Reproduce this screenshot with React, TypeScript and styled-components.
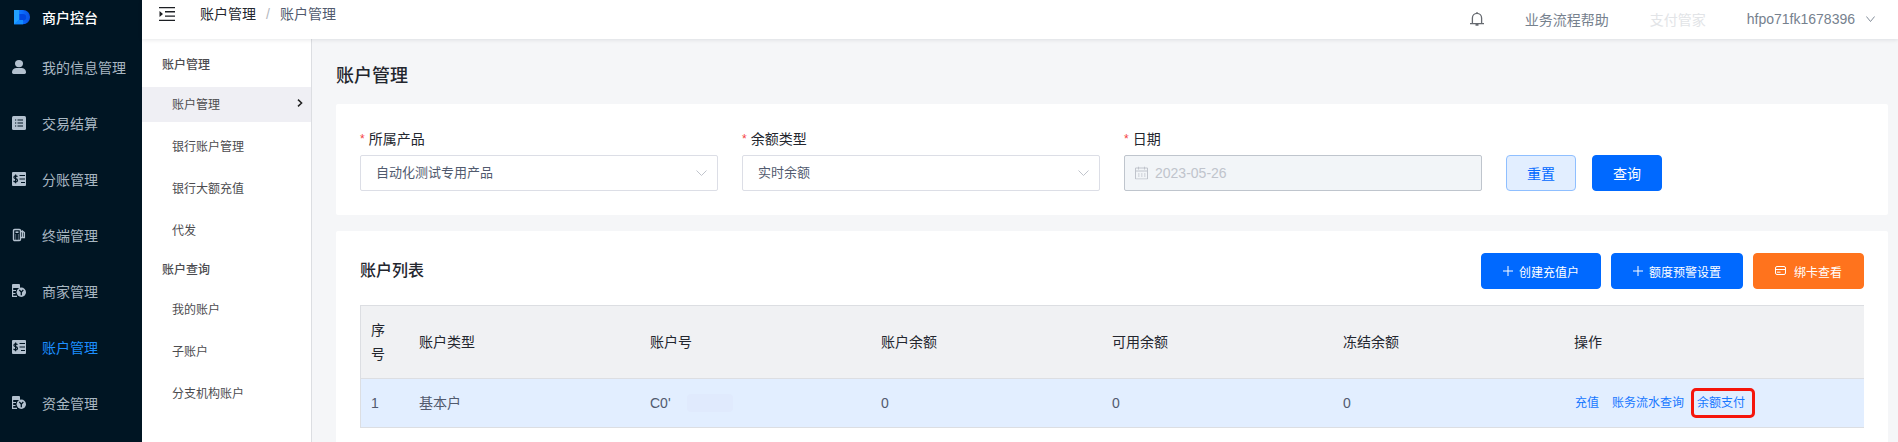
import React from "react";
import styled, { createGlobalStyle } from "styled-components";

const GlobalStyle = createGlobalStyle`
  *, *::before, *::after { box-sizing: border-box; }
  body {
    margin: 0;
    background: #f5f6f8;
    color: #23262e;
    font-family: "Liberation Sans", "Noto Sans CJK SC", sans-serif;
    font-size: 14px;
  }
  a { color: inherit; text-decoration: none; }
  ul { margin: 0; padding: 0; list-style: none; }
  button, input, select { font-family: inherit; }
  svg { display: block; flex: none; }
`;

const Shell = styled.div`
  display: flex;
  min-height: 100vh;
`;

const Sidebar = styled.nav`
  flex: none;
  width: 142px;
  background: #001523;
`;

const Brand = styled.a`
  display: flex;
  align-items: center;
  gap: 12px;
  height: 39px;
  padding: 0 0 5px 14px;
  color: #fff;
  font-weight: 500;
`;

const SideLink = styled.a<{ $active?: boolean }>`
  display: flex;
  align-items: center;
  gap: 16px;
  height: 56px;
  padding-left: 12px;
  color: ${(p) => (p.$active ? "#1c8fff" : "#a9b7c2")};

  svg { color: #b3c1cf; }
`;

const Body = styled.div`
  flex: 1;
  min-width: 0;
  display: flex;
  flex-direction: column;
`;

const Topbar = styled.header`
  position: relative;
  z-index: 1;
  display: flex;
  justify-content: space-between;
  height: 39px;
  padding: 0 23px 0 16px;
  background: #fff;
  box-shadow: 0 1px 4px rgba(0, 21, 41, 0.1);
`;

const TopLeft = styled.div`
  display: flex;
  align-items: center;
  gap: 24px;
  height: 28px;
`;

const IconButton = styled.button`
  padding: 0;
  border: 0;
  background: none;
  color: #1c1f23;
  cursor: pointer;
`;

const Crumbs = styled.div`
  display: flex;
  align-items: baseline;
  gap: 10px;
  color: #515a6e;
  line-height: 22px;

  a { color: #23262e; }
  i { color: #b4b8c0; font-style: normal; }
`;

const TopRight = styled.div`
  display: flex;
  align-items: center;
  gap: 41px;
  height: 37px;
  color: #76818e;
`;

const MutedLink = styled.a`
  color: #e2e4e7;
`;

const UserMenu = styled.button`
  display: flex;
  align-items: center;
  gap: 11px;
  padding: 0;
  border: 0;
  background: none;
  color: inherit;
  font-size: 14px;
  cursor: pointer;
`;

const Columns = styled.div`
  flex: 1;
  display: flex;
`;

const Submenu = styled.nav`
  flex: none;
  width: 170px;
  padding-top: 4px;
  border-right: 1px solid #dcdee2;
  background: #fff;
  color: #4c4c4f;
  font-size: 12px;
`;

const GroupTitle = styled.h2`
  margin: 0;
  padding-left: 20px;
  font-size: 12px;
  font-weight: 500;
  line-height: 44px;
`;

const SubItem = styled.li`
  & + & { margin-top: 7px; }
`;

const SubLink = styled.a<{ $active?: boolean }>`
  display: flex;
  align-items: center;
  justify-content: space-between;
  height: 35px;
  padding: 0 8px 3px 30px;
  background: ${(p) => (p.$active ? "#efeff4" : "transparent")};
`;

const Main = styled.main`
  flex: 1;
  min-width: 0;
  display: flex;
  flex-direction: column;
  padding: 23px 10px 0 24px;
`;

const PageTitle = styled.h1`
  margin: 0 0 14px;
  font-size: 18px;
  font-weight: 500;
  line-height: 28px;
`;

const FilterCard = styled.form`
  display: grid;
  grid-template-columns: repeat(4, 1fr);
  gap: 24px;
  align-items: end;
  margin-bottom: 16px;
  padding: 24px;
  border-radius: 2px;
  background: #fff;
`;

const Field = styled.div`
  display: flex;
  flex-direction: column;
  gap: 5px;
`;

const Label = styled.label`
  display: flex;
  gap: 4px;
  height: 22px;
  line-height: 22px;

  &::before {
    content: "*";
    color: #f53f3f;
    font-size: 12px;
  }
`;

const Control = styled.div<{ $iconSide: "left" | "right" }>`
  position: relative;

  svg {
    position: absolute;
    top: 50%;
    ${(p) => p.$iconSide}: 11px;
    transform: translateY(-50%);
    pointer-events: none;
  }
`;

const Select = styled.select`
  appearance: none;
  display: block;
  width: 100%;
  height: 36px;
  padding: 0 32px 2px 15px;
  border: 1px solid #dcdee6;
  border-radius: 2px;
  background: #fff;
  color: #515a6e;
  font-size: 13px;
`;

const DateInput = styled.input`
  display: block;
  width: 100%;
  height: 36px;
  padding: 0 12px 0 30px;
  border: 1px solid #bfc5cd;
  border-radius: 2px;
  background: #f2f5f8;
  color: #c0c4cc;
  font-size: 14px;
`;

const ButtonRow = styled.div<{ $gap: number }>`
  display: flex;
  gap: ${(p) => p.$gap}px;
`;

const tones = {
  primary: ["#0069ff", "#0069ff", "#fff"],
  soft: ["#e2eeff", "#8fbfff", "#0069ff"],
  orange: ["#ff731d", "#ff731d", "#fff"],
};

const Button = styled.button<{ $tone: keyof typeof tones; $small?: boolean }>`
  display: flex;
  align-items: center;
  gap: 6px;
  height: 36px;
  padding: 0 ${(p) => (p.$small ? 21 : 20)}px;
  border: 1px solid ${(p) => tones[p.$tone][1]};
  border-radius: 4px;
  background: ${(p) => tones[p.$tone][0]};
  color: ${(p) => tones[p.$tone][2]};
  font-size: ${(p) => (p.$small ? 12 : 14)}px;
  white-space: nowrap;
  cursor: pointer;
`;

const ListCard = styled.section`
  flex: 1;
  padding: 22px 24px 14px;
  border-radius: 2px 2px 0 0;
  background: #fff;
`;

const ListHead = styled.div`
  display: flex;
  align-items: center;
  justify-content: space-between;
  margin-bottom: 16px;
`;

const ListTitle = styled.h2`
  margin: 0;
  font-size: 16px;
  font-weight: 500;
  line-height: 24px;
`;

const Table = styled.table`
  width: 100%;
  border: 1px solid #dcdee2;
  border-width: 1px 0 0 1px;
  border-spacing: 0;
  table-layout: fixed;
  line-height: 24px;

  th, td {
    padding: 12px 10px;
    border-bottom: 1px solid #dcdee2;
    text-align: left;
  }
  th { background: #f0f1f3; color: #23262e; font-weight: 400; }
  td { background: #e2eeff; color: #515a6e; }
  th:first-child { padding-right: 20px; }
`;

const Col = styled.col<{ $width: string }>`
  width: ${(p) => p.$width};
`;

const AccountNo = styled.div`
  display: flex;
  align-items: center;
  gap: 16px;
`;

const Mask = styled.span`
  width: 46px;
  height: 18px;
  border-radius: 4px;
  background: #e0eafd;
`;

const Actions = styled.div`
  display: flex;
  gap: 13px;
  padding-left: 1px;
  color: #1677ff;
  font-size: 12px;
`;

const MarkedLink = styled.a`
  position: relative;

  &::after {
    content: "";
    position: absolute;
    inset: -3px -10px -3px -6px;
    border: 3px solid #f5160c;
    border-radius: 5px;
  }
`;

const LogoIcon = () => (
  <svg width="16" height="15" viewBox="0 0 16 15" aria-hidden="true">
    <defs>
      <linearGradient id="logo" x1="0" x2="1" y1="0" y2="0">
        <stop offset="0" stopColor="#1488ff" />
        <stop offset=".5" stopColor="#0a6cff" />
        <stop offset="1" stopColor="#0a4fe0" />
      </linearGradient>
    </defs>
    <path d="M0 0h9a7 7 0 0 1 7 7.200a7 7 0 0 1-7 7.100H0z" fill="url(#logo)" />
    <path d="M5.500 4h3.500a3.200 3.200 0 0 1 0 6.400H5.500z" fill="#0046e0" />
    <path d="M0 0h5v10L0 14.300z" fill="#22a0ff" />
    <path d="M0 14.300L5 10h4v4.300z" fill="#128aff" />
  </svg>
);

const PersonIcon = () => (
  <svg width="14" height="14" viewBox="0 0 14 14" fill="currentColor" aria-hidden="true">
    <ellipse cx="7" cy="3.600" rx="4" ry="3.600" />
    <path d="M4 8h6q4 .6 4 4.600Q14 14 12.500 14h-11Q0 14 0 12.600 0 8.600 4 8z" />
  </svg>
);

const ListIcon = () => (
  <svg width="14" height="14" viewBox="0 0 14 14" aria-hidden="true">
    <rect width="14" height="14" rx="1.500" fill="currentColor" />
    <path d="M3 4h1.200M3 7h1.200M3 10h1.200M5.500 4H11M5.500 7H11M5.500 10H11" stroke="#001523" strokeWidth="1.200" />
  </svg>
);

const BillIcon = () => (
  <svg width="14" height="14" viewBox="0 0 14 14" aria-hidden="true">
    <rect width="14" height="14" rx="1" fill="currentColor" />
    <path d="M5.400 4.700Q5 3.800 3.600 3.800 1.900 3.800 1.900 5.200 1.900 6.400 3.600 6.700 5.500 7 5.500 8.400 5.500 9.900 3.600 9.900 2 9.900 1.600 8.700M3.600 2.500v8.700M7.500 3.500H13M7.500 7H13M9 10.500h4" fill="none" stroke="#001523" strokeWidth="1.200" />
  </svg>
);

const TerminalIcon = () => (
  <svg width="14" height="14" viewBox="0 0 14 14" fill="none" stroke="currentColor" aria-hidden="true">
    <rect x="1.500" y="1.500" width="7" height="11" rx="1.200" strokeWidth="1.400" />
    <path d="M3.500 4.200h3" strokeWidth="1.600" />
    <path d="M3.200 7h1M5.800 7h1M3.200 9h1M5.800 9h1M3.200 11h1M5.800 11h1" strokeWidth="1.100" />
    <path d="M9 3.500h1.500M9 9.500h3.400V4.500L10.500 3v6.500" strokeWidth="1.300" />
  </svg>
);

const CoinIcon = () => (
  <svg width="14" height="14" viewBox="0 0 14 14" aria-hidden="true">
    <path d="M0 1q0-1 1-1h6q1 0 1 1v3H0z" fill="currentColor" />
    <path d="M.6 4v8.400M0 6.500h4M0 9.500h3.500M0 12.400h5" stroke="currentColor" strokeWidth="1.200" />
    <circle cx="9.300" cy="8.300" r="4.700" fill="currentColor" />
    <path d="M7.300 5.800l2 2.400 2-2.400M9.300 8v3.200" fill="none" stroke="#001523" strokeWidth="1.300" />
  </svg>
);

const FoldIcon = () => (
  <svg width="18" height="14" viewBox="0 0 18 14" fill="currentColor" aria-hidden="true">
    <path d="M1 0h16v1.300H1zM7 4.100h10v1.300H7zM7 8.400h10v1.300H7zM1 12.700h16V14H1zM1.500 4v6L5 7z" />
  </svg>
);

const BellIcon = () => (
  <svg width="14" height="14" viewBox="0 0 14 14" fill="none" stroke="#666a70" strokeWidth="1.300" aria-hidden="true">
    <path d="M0 11.600h14M2.400 11.600V6a4.600 4.600 0 0 1 9.200 0v5.600M7 0v1.500M5.500 13h3" />
  </svg>
);

const ChevronDown = ({ size = 11, color = "#c0c4cc" }) => (
  <svg width={size} height="6" viewBox="0 0 11 6" fill="none" stroke={color} preserveAspectRatio="none" aria-hidden="true">
    <path d="M.5 .5l5 5 5-5" />
  </svg>
);

const ChevronRight = () => (
  <svg width="6" height="8" viewBox="0 0 6 8" fill="none" stroke="#222" strokeWidth="1.500" aria-hidden="true">
    <path d="M1 .6L4.600 4 1 7.400" />
  </svg>
);

const CalendarIcon = () => (
  <svg width="13" height="13" viewBox="0 0 13 13" fill="none" stroke="#c0c4cc" aria-hidden="true">
    <path d="M.5 1.500h12v11H.5zM.5 4.500h12M3.500 0v3M9.500 0v3M3 7.500h1.500M6 7.500h1.500M9 7.500h1.500M3 9.500h1.500M6 9.500h1.500M9 9.500h1.500" />
  </svg>
);

const PlusIcon = () => (
  <svg width="10" height="10" viewBox="0 0 10 10" stroke="currentColor" aria-hidden="true">
    <path d="M0 5h10M5 0v10" />
  </svg>
);

const CardIcon = () => (
  <svg width="13" height="10" viewBox="0 0 13 10" fill="none" stroke="currentColor" aria-hidden="true">
    <rect x=".5" y=".5" width="10" height="8" rx="1.500" />
    <path d="M.5 3.500h10M2 6.200h3.500" />
  </svg>
);

const sideItems = [
  { label: "我的信息管理", Icon: PersonIcon },
  { label: "交易结算", Icon: ListIcon },
  { label: "分账管理", Icon: BillIcon },
  { label: "终端管理", Icon: TerminalIcon },
  { label: "商家管理", Icon: CoinIcon },
  { label: "账户管理", Icon: BillIcon, active: true },
  { label: "资金管理", Icon: CoinIcon },
];

const groups = [
  { title: "账户管理", items: ["账户管理", "银行账户管理", "银行大额充值", "代发"], active: 0 },
  { title: "账户查询", items: ["我的账户", "子账户", "分支机构账户"], active: -1 },
];

const headers = ["序号", "账户类型", "账户号", "账户余额", "可用余额", "冻结余额", "操作"];

const SelectField = ({ id, label, value }: { id: string; label: string; value: string }) => (
  <Field>
    <Label htmlFor={id}>{label}</Label>
    <Control $iconSide="right">
      <Select id={id} defaultValue={value}>
        <option>{value}</option>
      </Select>
      <ChevronDown />
    </Control>
  </Field>
);

export default function App() {
  return (
    <>
      <GlobalStyle />
      <Shell>
        <Sidebar>
          <Brand href="#">
            <LogoIcon />
            商户控台
          </Brand>
          <ul>
            {sideItems.map(({ label, Icon, active }) => (
              <li key={label}>
                <SideLink href="#" $active={active}>
                  <Icon />
                  {label}
                </SideLink>
              </li>
            ))}
          </ul>
        </Sidebar>
        <Body>
          <Topbar>
            <TopLeft>
              <IconButton type="button" aria-label="收起菜单">
                <FoldIcon />
              </IconButton>
              <Crumbs>
                <a href="#">账户管理</a>
                <i>/</i>
                <span>账户管理</span>
              </Crumbs>
            </TopLeft>
            <TopRight>
              <IconButton type="button" aria-label="通知">
                <BellIcon />
              </IconButton>
              <a href="#">业务流程帮助</a>
              <MutedLink href="#">支付管家</MutedLink>
              <UserMenu type="button">
                hfpo71fk1678396
                <ChevronDown size={9} color="#76818e" />
              </UserMenu>
            </TopRight>
          </Topbar>
          <Columns>
            <Submenu>
              {groups.map((group) => (
                <section key={group.title}>
                  <GroupTitle>{group.title}</GroupTitle>
                  <ul>
                    {group.items.map((item, i) => (
                      <SubItem key={item}>
                        <SubLink href="#" $active={i === group.active}>
                          {item}
                          {i === group.active && <ChevronRight />}
                        </SubLink>
                      </SubItem>
                    ))}
                  </ul>
                </section>
              ))}
            </Submenu>
            <Main>
              <PageTitle>账户管理</PageTitle>
              <FilterCard>
                <SelectField id="product" label="所属产品" value="自动化测试专用产品" />
                <SelectField id="balance" label="余额类型" value="实时余额" />
                <Field>
                  <Label htmlFor="date">日期</Label>
                  <Control $iconSide="left">
                    <DateInput id="date" defaultValue="2023-05-26" disabled />
                    <CalendarIcon />
                  </Control>
                </Field>
                <ButtonRow $gap={16}>
                  <Button type="reset" $tone="soft">重置</Button>
                  <Button type="button" $tone="primary">查询</Button>
                </ButtonRow>
              </FilterCard>
              <ListCard>
                <ListHead>
                  <ListTitle>账户列表</ListTitle>
                  <ButtonRow $gap={10}>
                    <Button type="button" $tone="primary" $small>
                      <PlusIcon />
                      创建充值户
                    </Button>
                    <Button type="button" $tone="primary" $small>
                      <PlusIcon />
                      额度预警设置
                    </Button>
                    <Button type="button" $tone="orange" $small>
                      <CardIcon />
                      绑卡查看
                    </Button>
                  </ButtonRow>
                </ListHead>
                <Table>
                  <colgroup>
                    <Col $width="48px" />
                    {headers.slice(1, -1).map((h) => (
                      <Col key={h} $width="15.370%" />
                    ))}
                    <Col $width="auto" />
                  </colgroup>
                  <thead>
                    <tr>
                      {headers.map((h) => (
                        <th key={h} scope="col">{h}</th>
                      ))}
                    </tr>
                  </thead>
                  <tbody>
                    <tr>
                      <td>1</td>
                      <td>基本户</td>
                      <td>
                        <AccountNo>
                          C0'
                          <Mask />
                        </AccountNo>
                      </td>
                      <td>0</td>
                      <td>0</td>
                      <td>0</td>
                      <td>
                        <Actions>
                          <a href="#">充值</a>
                          <a href="#">账务流水查询</a>
                          <MarkedLink href="#">余额支付</MarkedLink>
                        </Actions>
                      </td>
                    </tr>
                  </tbody>
                </Table>
              </ListCard>
            </Main>
          </Columns>
        </Body>
      </Shell>
    </>
  );
}
